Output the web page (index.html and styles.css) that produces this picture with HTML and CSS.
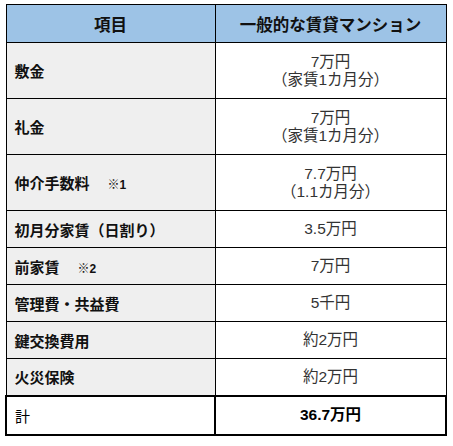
FILE: index.html
```html
<!DOCTYPE html>
<html lang="ja">
<head>
<meta charset="utf-8">
<link rel="stylesheet" href="styles.css">
</head>
<body>
<table class="cost">
  <thead>
    <tr class="row-head">
      <th class="col-item">項目</th>
      <th class="col-val">一般的な賃貸マンション</th>
    </tr>
  </thead>
  <tbody>
    <tr class="row-tall">
      <td class="label">敷金</td>
      <td class="value">7万円<br>（家賃1カ月分）</td>
    </tr>
    <tr class="row-tall">
      <td class="label">礼金</td>
      <td class="value">7万円<br>（家賃1カ月分）</td>
    </tr>
    <tr class="row-tall">
      <td class="label">仲介手数料<span class="note">※1</span></td>
      <td class="value">7.7万円<br>（1.1カ月分）</td>
    </tr>
    <tr class="row-std">
      <td class="label">初月分家賃（日割り）</td>
      <td class="value">3.5万円</td>
    </tr>
    <tr class="row-std">
      <td class="label">前家賃<span class="note">※2</span></td>
      <td class="value">7万円</td>
    </tr>
    <tr class="row-std">
      <td class="label">管理費・共益費</td>
      <td class="value">5千円</td>
    </tr>
    <tr class="row-std">
      <td class="label">鍵交換費用</td>
      <td class="value">約2万円</td>
    </tr>
    <tr class="row-std">
      <td class="label">火災保険</td>
      <td class="value">約2万円</td>
    </tr>
    <tr class="row-total">
      <td class="label total-label">計</td>
      <td class="value total-value">36.7万円</td>
    </tr>
  </tbody>
</table>
</body>
</html>
```
FILE: styles.css
```css
html, body {
  background: #ffffff;
}
body {
  margin: 4px 0 0 5px;
  font-family: "Noto Sans CJK JP", "Noto Sans", sans-serif;
  color: #000;
  text-spacing-trim: space-all;
}
.cost {
  border-collapse: collapse;
  width: 442px;
  table-layout: fixed;
}
.cost th,
.cost td {
  border: 1px solid #000;
  padding: 0;
}
.col-item {
  width: 208px;
}
.cost th {
  background: #9dc3e6;
  font-weight: bold;
  font-size: 16.5px;
  text-align: center;
  vertical-align: middle;
  color: #111;
}
.row-head { height: 38px; }
.row-tall { height: 56px; }
.row-std { height: 37px; }
.row-total { height: 39px; }

.label {
  background: #efefef;
  font-weight: bold;
  font-size: 15px;
  padding-left: 8px !important;
  text-align: left;
  vertical-align: middle;
  color: #111;
}
.note {
  font-family: "Liberation Sans", "Noto Sans CJK JP", sans-serif;
  font-size: 12px;
  margin-left: 18px;
  font-weight: bold;
}
.value {
  background: #fff;
  text-align: center;
  vertical-align: middle;
  font-family: "Liberation Sans", "Noto Sans CJK JP", sans-serif;
  font-size: 15.5px;
  line-height: 18px;
  color: #333;
}
.row-total td {
  border: 2px solid #000;
}
.total-label {
  background: #fff;
  font-weight: normal;
  color: #000;
}
.total-value {
  font-weight: bold;
  color: #000;
}
```
